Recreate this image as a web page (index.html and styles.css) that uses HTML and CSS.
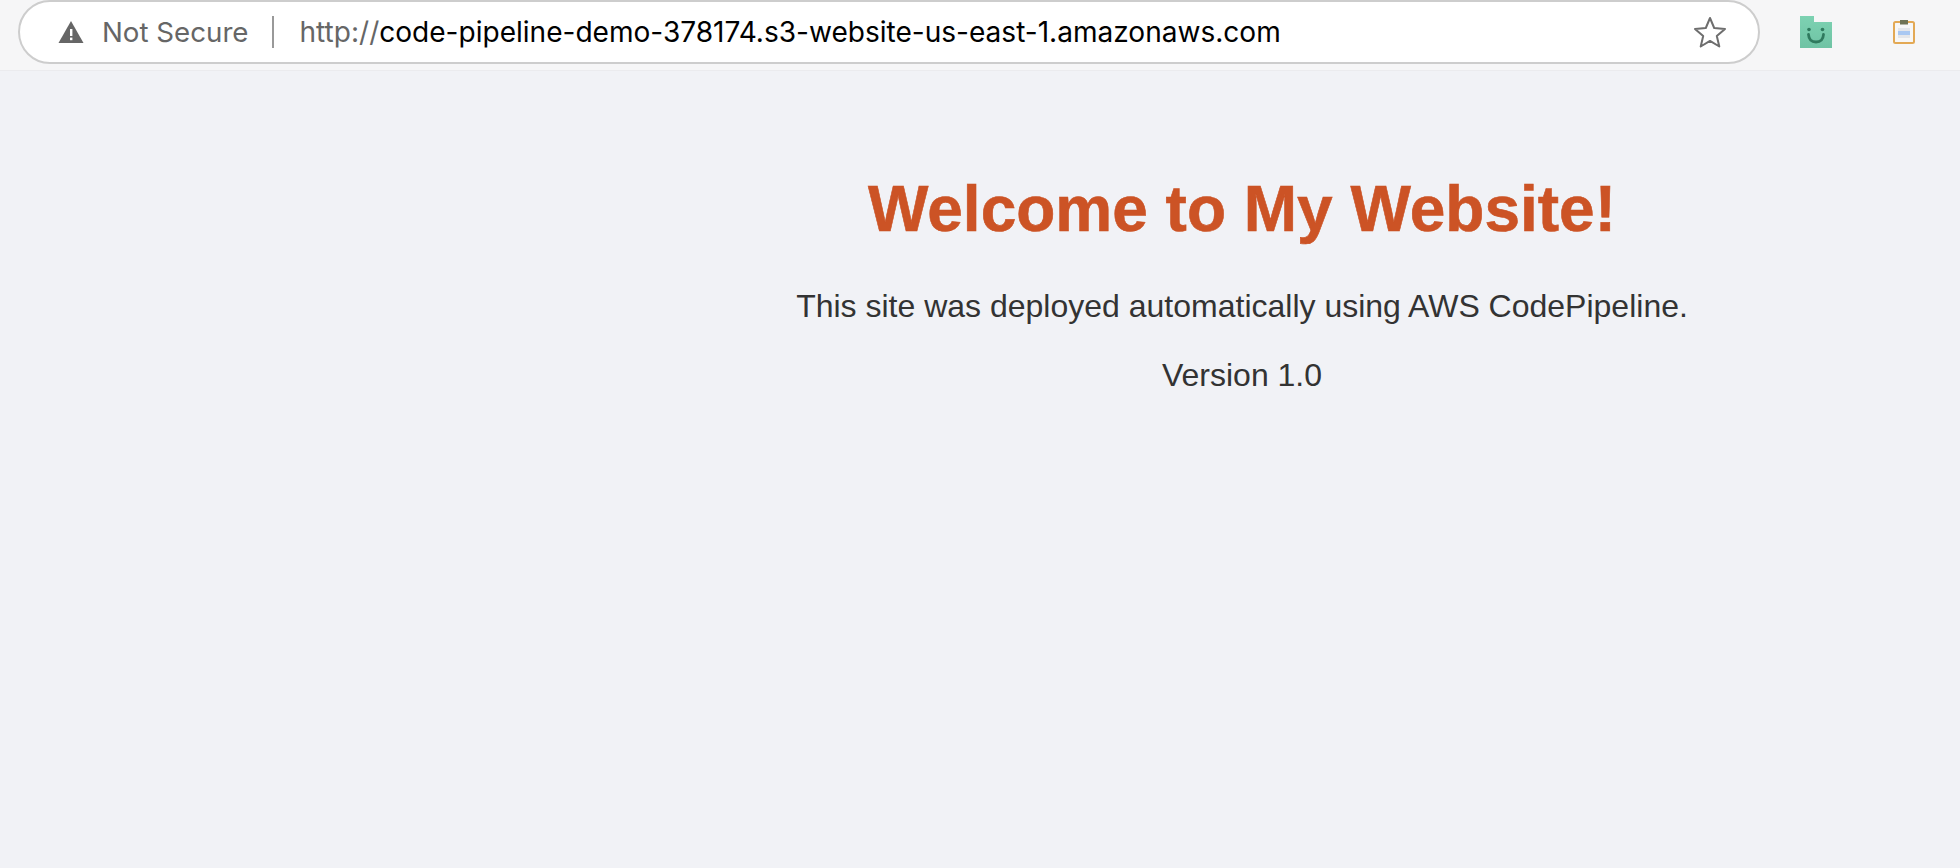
FILE: index.html
```html
<!DOCTYPE html>
<html lang="en">
<head>
<meta charset="utf-8">
<title>Welcome to My Website!</title>
<link rel="stylesheet" href="styles.css">
</head>
<body>
<header class="toolbar">
  <div class="omnibox">
    <svg class="warn" width="26" height="22" viewBox="0 0 26 22"><path d="M13 0 L25.5 22 H0.5 Z" fill="#666"/><rect x="12" y="8" width="2.4" height="7" fill="#fff"/><rect x="12" y="16.6" width="2.4" height="2.6" fill="#fff"/></svg>
    <span class="secure">Not Secure</span>
    <span class="divider"></span>
    <span class="url"><span class="scheme">http://</span>code-pipeline-demo-378174.s3-website-us-east-1.amazonaws.com</span>
    <svg class="star" width="34" height="32" viewBox="0 0 34 32"><path d="M17 2 L21.2 12 L32 12.9 L23.8 20 L26.3 30.5 L17 24.9 L7.7 30.5 L10.2 20 L2 12.9 L12.8 12 Z" fill="none" stroke="#6e6e6e" stroke-width="2" stroke-linejoin="round"/></svg>
  </div>
  <div class="extensions">
    <svg class="ext-folder" width="32" height="32" viewBox="0 0 32 32"><defs><linearGradient id="folderFill" x1="0" y1="0" x2="0" y2="1"><stop offset="0" stop-color="#7dd2b2"/><stop offset="1" stop-color="#6fc3a4"/></linearGradient></defs><path d="M0 0 H14 V6 H32 V32 H0 Z" fill="url(#folderFill)"/><circle cx="9" cy="13.5" r="1.8" fill="#2f7a5e"/><circle cx="22.5" cy="13.5" r="1.8" fill="#2f7a5e"/><path d="M8.5 18.5 Q9 26 16 26 Q23 26 23.5 18.5" fill="none" stroke="#2f7a5e" stroke-width="2.8" stroke-linecap="round"/></svg>
    <svg class="ext-clip" width="24" height="26" viewBox="0 0 24 26"><rect x="2" y="3" width="20" height="21" rx="1.5" fill="#f7f7f7" stroke="#e3a955" stroke-width="2"/><rect x="8" y="1" width="8" height="4.5" fill="#6f7355"/><rect x="6" y="9" width="12" height="3" fill="#e4e6ea"/><rect x="6" y="12" width="12" height="4" fill="#a9c8f2"/><rect x="6" y="16" width="12" height="3" fill="#e4e6ea"/></svg>
  </div>
</header>
<main class="page">
  <h1 class="title">Welcome to My Website!</h1>
  <p class="lead">This site was deployed automatically using AWS CodePipeline.</p>
  <p class="lead">Version 1.0</p>
</main>
</body>
</html>
```
FILE: styles.css
```css
* { box-sizing: border-box; }
html, body { margin: 0; height: 100%; }
body { background: #f1f2f6; font-family: "Liberation Sans", Arial, sans-serif; overflow: hidden; }
.toolbar { height: 71px; background: #f6f6f7; border-bottom: 1px solid #ebebee; display: flex; padding: 0 0 0 18px; }
.omnibox { width: 1742px; height: 64px; background: #fff; border: 2px solid #cdcdcd; border-radius: 32px; display: flex; align-items: center; padding-left: 38px; padding-right: 31px; }
.warn { flex: none; margin-right: 18px; }
.secure { font-size: 27.7px; color: #666; font-family: "Inter", "Liberation Sans", sans-serif; }
.divider { width: 2px; height: 32px; background: #999; margin: 0 26px 0 23px; }
.url { font-size: 28.05px; color: #000; font-family: "Inter", "Liberation Sans", sans-serif; flex: 1; white-space: nowrap; }
.scheme { color: #666; }
.star { flex: none; }
.extensions { display: flex; align-items: flex-start; padding-left: 40px; padding-top: 16px; gap: 60px; }
.ext-clip { margin-top: 3px; }
.page { padding-left: 524px; text-align: center; }
.title { margin: 101px 0 42px; font-size: 64px; line-height: 74px; font-weight: 700; color: #cc5325; -webkit-text-stroke: 0.6px #cc5325; }
.lead { margin: 0 0 32px; font-size: 32px; line-height: 37px; color: #333; }
```
